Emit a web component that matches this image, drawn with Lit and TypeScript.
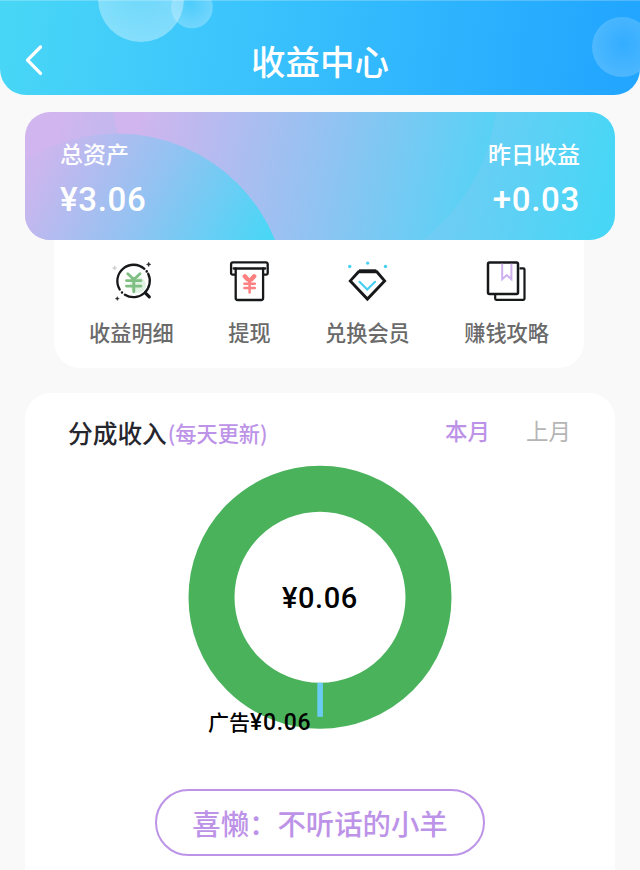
import { css, html, LitElement, svg } from 'lit';
import { customElement, property, state } from 'lit/decorators.js';
import { classMap } from 'lit/directives/class-map.js';

const ICONS: Record<string, unknown> = {
  detail: svg`
    <circle cx="27" cy="24.6" r="8" fill="#e0f2e1" />
    <g fill="none" stroke="#17181a" stroke-width="2.3" stroke-linecap="round">
      <path d="M8.7 29A16.3 16.3 0 0 1 33.4 8.3" />
      <path d="M37.2 13.3A16.3 16.3 0 0 1 13.9 34.2" />
      <path d="M35.7 10.8v.1M11 31.9v.1" stroke-width="2.5" />
      <path d="m34.3 32.3 4 4" stroke-width="3.2" />
    </g>
    <path d="m16.8 13.3 6 5.7 6.2-5.7M15.5 20.1h14.4M15.5 25.6h14.4M22.8 19.3v12" fill="none" stroke="#7fbf83" stroke-width="2.9" stroke-linecap="round" stroke-linejoin="round" />
    <path d="m37.7 1.6.7 1.6 1.6.7-1.6.7-.7 1.6-.7-1.6-1.6-.7 1.6-.7z M6.3 36.1l.6 1.4 1.4.6-1.4.6-.6 1.4-.6-1.4-1.4-.6 1.4-.6z" fill="#26262b" stroke="#26262b" stroke-width=".4" />
    <path d="m3.6 5.2.7 1.6 1.6.7-1.6.7-.7 1.6-.7-1.6-1.6-.7 1.6-.7z" fill="#ccc" stroke="#ccc" stroke-width=".4" />
  `,
  withdraw: svg`
    <g fill="none" stroke="#17181a" stroke-width="2.3" stroke-linejoin="round" stroke-linecap="round">
      <path d="M6 14.2H3.6a1.5 1.5 0 0 1-1.5-1.5V3.7a1.8 1.8 0 0 1 1.8-1.8h33a1.8 1.8 0 0 1 1.8 1.8v9a1.5 1.5 0 0 1-1.5 1.500H35" />
      <path d="M4.7 8h31.500" />
      <path d="M6.700 8v29.500a2 2 0 0 0 2 2h23.400a2 2 0 0 0 2-2V8" />
    </g>
    <g fill="none" stroke="#ff8080" stroke-linecap="round">
      <path d="m15.8 15.8 2.5 2.7M25.2 15.8l-2.5 2.7" stroke-width="4.4" />
      <path d="m18 18.5 2.6 3 2.5-3M20.6 20.5v11.500M15.4 23.2h10.4M15.4 27.6h10.4" stroke-width="2.5" />
    </g>
  `,
  vip: svg`
    <path d="M11.6 11.2h18.2l7.8 9.200-17.200 18.200L3.300 20.400z" fill="none" stroke="#17181a" stroke-width="2.9" />
    <path d="M12 10.400h17.300" stroke="#17181a" stroke-width="3.2" />
    <path d="m12.500 21.300 7.700 7.700 7.900-7.700" fill="none" stroke="#46cdf0" stroke-width="2.1" stroke-linecap="round" />
    <g fill="#46d0f4"><circle cx="2.7" cy="6" r="1.7" /><circle cx="20.7" cy="2.6" r="1.7" /><circle cx="38.5" cy="6" r="1.7" /></g>
  `,
  guide: svg`
    <g fill="none" stroke="#17181a" stroke-width="2.5" stroke-linejoin="round">
      <path d="M8.2 33.500v4.800a1 1 0 0 0 1 1h27.300a1 1 0 0 0 1-1V8.900a1 1 0 0 0-1-1H32.500" stroke-width="2.2" />
      <rect x="1" y="2" width="30" height="31.500" rx="1.500" />
    </g>
    <path d="M15.200 3.300v15.500l4.600-4.200 4.600 4.200V3.300" fill="none" stroke="#cfb0ee" stroke-width="2" />
  `,
};

@customElement('menu-item')
export class MenuItem extends LitElement {

  @property() icon = '';

  @property() label = '';

  render () {
    return html`
      <svg class="icon" viewBox="-1 -0.5 42 42">${ICONS[this.icon]}</svg>
      <div class="label">${this.label}</div>
    `;
  }

  static get styles () {
    return [
      // language=CSS
      css`
        :host {
          align-items: center;
          display: flex;
          flex-direction: column;
          gap: 15px;
        }

        .icon {
          display: block;
          height: 42px;
          width: 42px;
        }

        .label {
          color: #6a6a6a;
          font-size: 21.2px;
          font-weight: 500;
          line-height: 30px;
          white-space: nowrap;
        }
      `,
    ];
  }
}

@customElement('app-root')
export class AppRoot extends LitElement {

  @state() private month = '本月';

  private renderTab (name: string) {
    const classes = { tab: true, active: this.month === name };
    return html`<div class=${classMap(classes)} @click=${() => this.month = name}>${name}</div>`;
  }

  render () {
    return html`
      <header class="header">
        <svg class="backdrop" viewBox="0 0 640 95">
          <defs>
            <radialGradient id="b1" cx=".5" cy=".35" r=".65">
              <stop offset="0" stop-color="#fff" stop-opacity=".22" />
              <stop offset="1" stop-color="#fff" stop-opacity=".36" />
            </radialGradient>
            <radialGradient id="b2" cx=".45" cy=".4" r=".6">
              <stop offset="0" stop-color="#fff" stop-opacity=".08" />
              <stop offset="1" stop-color="#fff" stop-opacity=".27" />
            </radialGradient>
            <radialGradient id="b3" cx=".52" cy=".45" r=".58">
              <stop offset="0" stop-color="#fff" stop-opacity=".08" />
              <stop offset="1" stop-color="#fff" stop-opacity=".2" />
            </radialGradient>
          </defs>
          <circle cx="192" cy="7.5" r="20.8" fill="url(#b2)" />
          <circle cx="141" cy="-1" r="43" fill="url(#b1)" />
          <circle cx="622" cy="47" r="30" fill="url(#b3)" />
        </svg>
        <svg class="back" viewBox="0 0 20 32">
          <path d="M16.5 3 3.5 16.200l13 13.200" fill="none" stroke="#fff" stroke-width="3.3" stroke-linecap="round" stroke-linejoin="round" />
        </svg>
        <h1 class="title">收益中心</h1>
      </header>

      <section class="summary">
        <svg class="backdrop" viewBox="25 112 590 128">
          <defs>
            <linearGradient id="s1" gradientUnits="userSpaceOnUse" x1="60" y1="130" x2="594" y2="245">
              <stop offset="0" stop-color="#d0b5ee" />
              <stop offset="1" stop-color="#48d6f6" />
            </linearGradient>
            <linearGradient id="s2" gradientUnits="userSpaceOnUse" x1="138" y1="125" x2="482" y2="205">
              <stop offset="0" stop-color="#d0b5ee" />
              <stop offset=".55" stop-color="#90c3f2" />
              <stop offset="1" stop-color="#56d2f5" />
            </linearGradient>
            <linearGradient id="s3" gradientUnits="userSpaceOnUse" x1="30" y1="176" x2="239" y2="289">
              <stop offset="0" stop-color="#ccb6ee" />
              <stop offset=".5" stop-color="#90c3f2" />
              <stop offset="1" stop-color="#4ad6f6" />
            </linearGradient>
          </defs>
          <rect x="25" y="112" width="590" height="128" fill="url(#s1)" />
          <circle cx="304.5" cy="87.6" r="193" fill="url(#s2)" />
          <circle cx="117" cy="304" r="170.5" fill="url(#s3)" />
        </svg>
        <div class="stat">
          <div class="name">总资产</div>
          <div class="money">¥3.06</div>
        </div>
        <div class="stat right">
          <div class="name">昨日收益</div>
          <div class="money">+0.03</div>
        </div>
      </section>

      <nav class="menu">
        <menu-item icon="detail" label="收益明细"></menu-item>
        <menu-item icon="withdraw" label="提现"></menu-item>
        <menu-item icon="vip" label="兑换会员"></menu-item>
        <menu-item icon="guide" label="赚钱攻略"></menu-item>
      </nav>

      <section class="income">
        <div class="head">
          <div class="heading">分成收入</div>
          <div class="hint">(每天更新)</div>
          <div class="tabs">
            ${this.renderTab('本月')}
            ${this.renderTab('上月')}
          </div>
        </div>
        <div class="chart">
          <svg class="donut" viewBox="0 0 264 264">
            <circle cx="132" cy="132.3" r="108.5" fill="none" stroke="#4bb25c" stroke-width="46" />
            <rect x="129.3" y="217.8" width="5.6" height="34" fill="#6accf3" />
          </svg>
          <div class="total">¥0.06</div>
          <div class="legend">广告<span class="amount">¥0.06</span></div>
        </div>
        <div class="author">喜懒：不听话的小羊</div>
      </section>
    `;
  }

  static get styles () {
    return [
      // language=CSS
      css`
        :host {
          background: #f9f9f9;
          box-sizing: border-box;
          display: flex;
          flex-direction: column;
          font-family: "Noto Sans CJK SC", sans-serif;
          height: 870px;
          overflow: hidden;
        }

        .backdrop {
          display: block;
          height: 100%;
          left: 0;
          position: absolute;
          top: 0;
          width: 100%;
        }

        .header {
          align-items: center;
          background: linear-gradient(98deg, #48d6f6 2%, #3dc6fc 33%, #22a6ff 96%);
          border-radius: 0 0 26px 26px;
          box-shadow: inset 0 1px 0 rgba(255, 255, 255, 0.22);
          box-sizing: border-box;
          display: flex;
          flex: none;
          height: 95px;
          overflow: hidden;
          padding: 25px 24px 0;
          position: relative;
        }

        .back {
          height: 32px;
          position: relative;
          width: 20px;
        }

        .title {
          color: #fff;
          flex: 1;
          font-size: 34.5px;
          font-weight: 500;
          line-height: 48px;
          margin: 0 20px 0 0;
          position: relative;
          text-align: center;
        }

        .summary {
          border-radius: 25px;
          box-sizing: border-box;
          color: #fff;
          display: flex;
          flex: none;
          height: 128px;
          justify-content: space-between;
          margin: 17px 25px 0;
          overflow: hidden;
          padding: 24px 35px 0;
          position: relative;
        }

        .stat {
          position: relative;
        }

        .stat.right {
          text-align: right;
        }

        .name {
          font-size: 23px;
          font-weight: 500;
          line-height: 34px;
        }

        .money {
          font-family: Roboto, sans-serif;
          font-size: 33px;
          font-weight: 500;
          letter-spacing: 0.7px;
          line-height: 40px;
          margin-top: 10px;
        }

        .menu {
          background: #fff;
          border-radius: 0 0 26px 26px;
          box-sizing: border-box;
          display: flex;
          flex: none;
          height: 128px;
          justify-content: space-between;
          margin: 0 56px 0 54px;
          padding: 20px 35px 0;
        }

        .income {
          align-items: center;
          background: #fff;
          border-radius: 26px 26px 0 0;
          box-sizing: border-box;
          display: flex;
          flex: 1;
          flex-direction: column;
          margin: 25px 25px 0;
          padding: 20px 44px 0 43px;
        }

        .head {
          align-items: center;
          align-self: stretch;
          display: flex;
          height: 38px;
        }

        .heading {
          color: #26262f;
          font-size: 24.7px;
          font-weight: 500;
        }

        .hint {
          color: #bd93e8;
          font-size: 21.2px;
          font-weight: 500;
          padding-left: 1px;
        }

        .tabs {
          display: flex;
          gap: 36px;
          margin-left: auto;
          padding-bottom: 4px;
        }

        .tab {
          color: #b5b5b5;
          font-size: 22.5px;
          font-weight: 400;
        }

        .tab.active {
          color: #bd93e8;
          font-weight: 500;
        }

        .chart {
          display: grid;
          height: 264px;
          margin: 14px 0 0 1px;
          place-items: center;
          position: relative;
          width: 264px;
        }

        .donut {
          grid-area: 1 / 1;
          height: 264px;
          width: 264px;
        }

        .total {
          color: #000;
          font-family: Roboto, sans-serif;
          font-size: 29px;
          font-weight: 500;
          grid-area: 1 / 1;
          letter-spacing: 0.6px;
          padding-top: 2px;
        }

        .legend {
          bottom: -10px;
          color: #000;
          font-size: 21px;
          font-weight: 500;
          left: 20px;
          line-height: 32px;
          position: absolute;
          white-space: nowrap;
        }

        .amount {
          font-family: Roboto, sans-serif;
          font-size: 23px;
          letter-spacing: 0.7px;
        }

        .author {
          border: 2px solid #bd93e8;
          border-radius: 34px;
          box-sizing: border-box;
          color: #bd93e8;
          font-size: 28.4px;
          font-weight: 500;
          height: 67px;
          line-height: 64px;
          margin: 60px 0 0 1px;
          text-align: center;
          width: 330px;
        }
      `,
    ];
  }
}
